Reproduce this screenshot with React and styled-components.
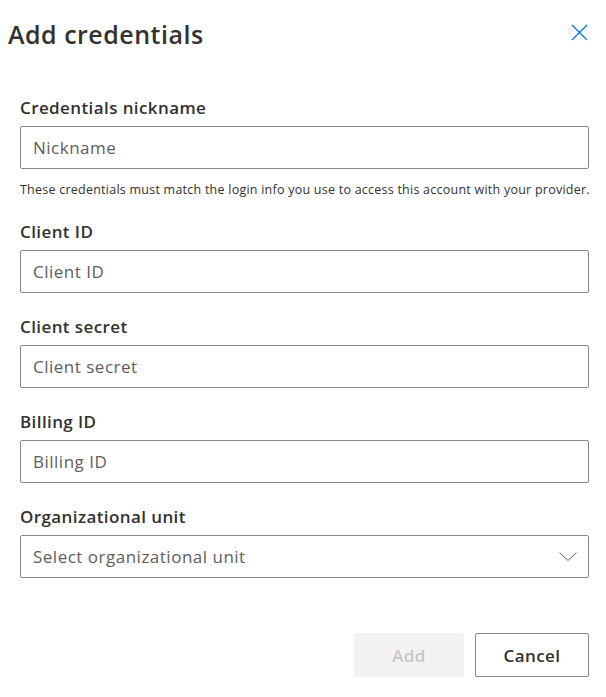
import React from "react";
import styled, { createGlobalStyle } from "styled-components";

const Global = createGlobalStyle`
  html, body { margin: 0; padding: 0; background: #ffffff; }
  body { font-family: "Open Sans", "Noto Sans", sans-serif; color: #323130; }
  * { box-sizing: border-box; }
`;

const Panel = styled.div`
  width: 606px;
  height: 697px;
  display: flex;
  flex-direction: column;
  background: #fff;
`;

const Header = styled.div`
  display: flex;
  align-items: center;
  justify-content: space-between;
  padding: 16px 17px 0 8px;
  height: 52px;
`;

const Title = styled.h1`
  margin: 0;
  font-size: 25px;
  line-height: 36px;
  font-weight: 600;
  color: #323130;
  letter-spacing: 0.5px;
`;

const CloseButton = styled.button`
  border: none;
  background: transparent;
  padding: 0;
  width: 20px;
  height: 20px;
  display: flex;
  align-items: center;
  justify-content: center;
  cursor: pointer;
  margin-top: -3px;
`;

const Body = styled.form`
  display: flex;
  flex-direction: column;
  gap: 22px;
  padding: 44px 17px 0 20px;
`;

const Field = styled.div`
  display: flex;
  flex-direction: column;
`;

const Label = styled.label`
  font-size: 17px;
  line-height: 24px;
  font-weight: 600;
  color: #323130;
  margin-bottom: 6px;
  letter-spacing: 0.4px;
`;

const InputBox = styled.div`
  position: relative;
  height: 43px;
  border: 1px solid #8a8886;
  border-radius: 2px;
  display: flex;
  align-items: center;
  padding: 0 11px 0 12px;
  background: #fff;
`;

const Input = styled.input`
  border: none;
  outline: none;
  background: transparent;
  width: 100%;
  font-family: "Open Sans", "Noto Sans", sans-serif;
  font-size: 17px;
  color: #323130;
  padding: 0;
  letter-spacing: 0.5px;
  &::placeholder { color: #605e5c; }
`;

const SelectText = styled.span`
  flex: 1;
  font-size: 17px;
  color: #605e5c;
  letter-spacing: 0.5px;
`;

const Helper = styled.p`
  margin: 13px 0 0;
  font-size: 12.5px;
  line-height: 16px;
  color: #323130;
  letter-spacing: 0.24px;
  white-space: nowrap;
`;

const Footer = styled.div`
  display: flex;
  justify-content: flex-end;
  gap: 11px;
  padding: 55px 17px 0 20px;
`;

const Button = styled.button`
  height: 44px;
  width: ${(p) => p.$w}px;
  border-radius: 2px;
  font-family: "Open Sans", "Noto Sans", sans-serif;
  font-size: 17px;
  font-weight: 600;
  letter-spacing: 0.4px;
  border: ${(p) => (p.disabled ? "none" : "1px solid #8a8886")};
  background: ${(p) => (p.disabled ? "#f3f2f1" : "#ffffff")};
  color: ${(p) => (p.disabled ? "#c8c6c4" : "#323130")};
  cursor: ${(p) => (p.disabled ? "default" : "pointer")};
`;

function TextField({ label, placeholder, children }) {
  return (
    <Field>
      <Label>{label}</Label>
      <InputBox>
        <Input placeholder={placeholder} />
      </InputBox>
      {children}
    </Field>
  );
}

export default function App() {
  return (
    <>
      <Global />
      <Panel>
        <Header>
          <Title>Add credentials</Title>
          <CloseButton aria-label="Close">
            <svg width="17" height="17" viewBox="0 0 17 17">
              <path d="M1 1 L16 16 M16 1 L1 16" stroke="#0078d4" strokeWidth="1.3" fill="none" />
            </svg>
          </CloseButton>
        </Header>
        <Body onSubmit={(e) => e.preventDefault()}>
          <TextField label="Credentials nickname" placeholder="Nickname">
            <Helper>
              These credentials must match the login info you use to access this account with your provider.
            </Helper>
          </TextField>
          <TextField label="Client ID" placeholder="Client ID" />
          <TextField label="Client secret" placeholder="Client secret" />
          <TextField label="Billing ID" placeholder="Billing ID" />
          <Field>
            <Label>Organizational unit</Label>
            <InputBox>
              <SelectText>Select organizational unit</SelectText>
              <svg width="18" height="9" viewBox="0 0 18 9">
                <path d="M0.5 0.5 L9 8.5 L17.5 0.5" stroke="#605e5c" strokeWidth="1" fill="none" />
              </svg>
            </InputBox>
          </Field>
        </Body>
        <Footer>
          <Button $w={110} disabled>Add</Button>
          <Button $w={114}>Cancel</Button>
        </Footer>
      </Panel>
    </>
  );
}
